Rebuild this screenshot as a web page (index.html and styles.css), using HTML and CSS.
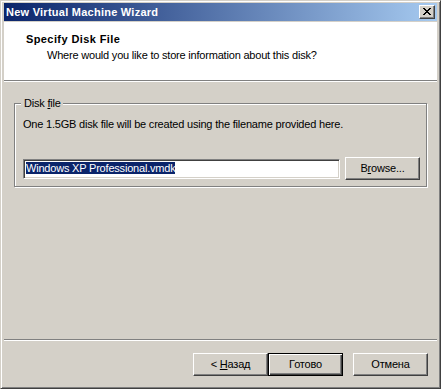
FILE: index.html
```html
<!DOCTYPE html>
<html lang="en">

<head>
    <meta charset="UTF-8">
    <title>New Virtual Machine Wizard</title>
    <link rel="stylesheet" href="styles.css">
</head>

<body>
    <div class="window">
        <div class="titlebar">
            <span class="title">New Virtual Machine Wizard</span>
            <div class="close">
                <svg width="8" height="7" viewBox="0 0 8 7">
                    <path d="M0 0h2v1h-2zM6 0h2v1h-2zM1 1h2v1h-2zM5 1h2v1h-2zM2 2h4v1h-4zM3 3h2v1h-2zM2 4h4v1h-4zM1 5h2v1h-2zM5 5h2v1h-2zM0 6h2v1h-2zM6 6h2v1h-2z" fill="#000"/>
                </svg>
            </div>
        </div>

        <div class="client">
            <div class="header">
                <div class="header-title">Specify Disk File</div>
                <div class="header-sub">Where would you like to store information about this disk?</div>
            </div>
            <div class="etched"></div>

            <div class="page">
                <div class="group">
                    <span class="legend">Disk <u>f</u>ile</span>
                    <p class="note">One 1.5GB disk file will be created using the filename provided here.</p>
                    <div class="file-row">
                        <div class="field"><span class="selected">Windows XP Professional.vmdk</span></div>
                        <div class="btn"><span>B<u>r</u>owse...</span></div>
                    </div>
                </div>

                <div class="footer">
                    <div class="etched"></div>
                    <div class="buttons">
                        <div class="btn"><span>&lt; <u>Н</u>азад</span></div>
                        <div class="btn default"><span>Готово</span></div>
                        <div class="btn cancel"><span>Отмена</span></div>
                    </div>
                </div>
            </div>
        </div>
    </div>
</body>

</html>
```

FILE: styles.css
```css
body {
    margin: 0;
    font-family: 'Liberation Sans', Arial, sans-serif;
    font-size: 11px;
    line-height: 13px;
    letter-spacing: -0.2px;
    color: #000;
    background: #d4d0c8;
}

.window {
    box-sizing: border-box;
    width: 441px;
    height: 389px;
    display: flex;
    flex-direction: column;
    background: #d4d0c8;
    border: 1px solid;
    border-color: #d4d0c8 #404040 #404040 #d4d0c8;
    box-shadow: inset 1px 1px #fff, inset -1px -1px #808080;
    padding: 2px 3px 3px 3px;
}

.titlebar {
    height: 18px;
    flex: none;
    display: flex;
    align-items: center;
    justify-content: space-between;
    padding: 0 2px 0 2px;
    background: linear-gradient(to right, #0a246a, #a6caf0);
    margin-bottom: 1px;
}

.title {
    color: #fff;
    font-weight: bold;
    letter-spacing: 0.25px;
}

.close {
    box-sizing: border-box;
    width: 16px;
    height: 14px;
    display: flex;
    align-items: center;
    justify-content: center;
    background: #d4d0c8;
    border: 1px solid;
    border-color: #fff #404040 #404040 #fff;
    box-shadow: inset -1px -1px #808080;
    padding-bottom: 1px;
}

.client {
    flex: 1;
    display: flex;
    flex-direction: column;
}

.header {
    height: 58px;
    flex: none;
    box-sizing: border-box;
    background: #fff;
    padding: 11px 0 0 22px;
}

.header-title {
    font-weight: bold;
    letter-spacing: 0.4px;
}

.header-sub {
    margin: 3px 0 0 21px;
}

.etched {
    flex: none;
    height: 0;
    border-top: 1px solid #808080;
    border-bottom: 1px solid #fff;
}

.page {
    flex: 1;
    display: flex;
    flex-direction: column;
}

.group {
    position: relative;
    margin: 21px 10px 0 10px;
    height: 84px;
    border: 1px solid #808080;
    box-shadow: inset 1px 1px #fff, 1px 1px #fff;
    box-sizing: border-box;
    padding: 0 0 0 8px;
}

.legend {
    position: absolute;
    left: 6px;
    top: -7px;
    padding: 0 2px 0 3px;
    background: #d4d0c8;
}

.note {
    margin: 14px 0 0 0;
}

.file-row {
    display: flex;
    align-items: center;
    gap: 5px;
    margin-top: 26px;
}

.field {
    box-sizing: border-box;
    width: 317px;
    height: 20px;
    background: #fff;
    border: 1px solid;
    border-color: #808080 #fff #fff #808080;
    box-shadow: inset 1px 1px #404040, inset -1px -1px #d4d0c8;
    padding: 2px 0 0 2px;
}

.selected {
    background: #0a246a;
    color: #fff;
}

.btn {
    box-sizing: border-box;
    width: 75px;
    height: 23px;
    display: flex;
    align-items: center;
    justify-content: center;
    background: #d4d0c8;
    border: 1px solid;
    border-color: #fff #404040 #404040 #fff;
    box-shadow: inset -1px -1px #808080;
}

.btn.default {
    border: 1px solid #000;
    box-shadow: inset 1px 1px #fff, inset -1px -1px #404040, inset -2px -2px #808080;
}

.footer {
    margin-top: auto;
}

.buttons {
    display: flex;
    justify-content: flex-end;
    padding: 12px 9px 9px 0;
}

.btn.cancel {
    margin-left: 10px;
}
```
